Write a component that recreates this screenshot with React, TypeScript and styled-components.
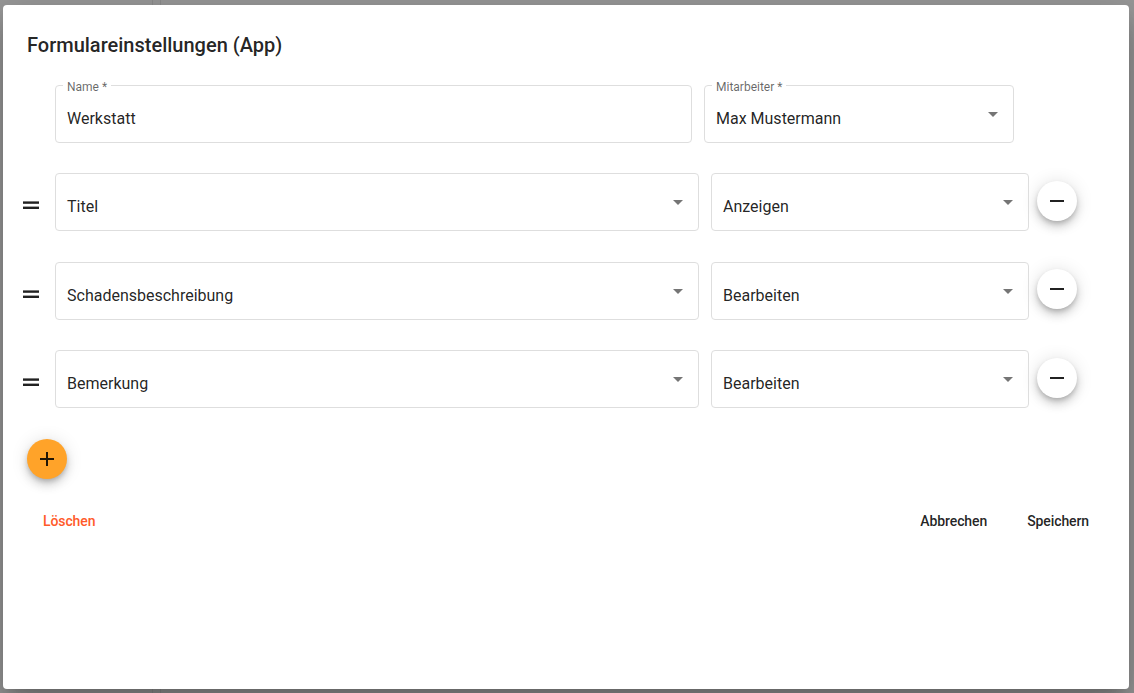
import React from 'react';
import styled, { createGlobalStyle } from 'styled-components';

const Global = createGlobalStyle`
  html, body { margin: 0; padding: 0; }
  body {
    width: 1134px;
    height: 693px;
    overflow: hidden;
    background-color: #999999;
    background-image:
      linear-gradient(to right, transparent 152px, #8d8d8d 152px, #8d8d8d 153px, transparent 153px, transparent 160px, #8d8d8d 160px, #8d8d8d 161px, transparent 161px);
    font-family: Roboto, "Liberation Sans", Arial, sans-serif;
    color: rgba(0, 0, 0, 0.87);
  }
`;

const Page = styled.div`
  width: 1134px;
  height: 693px;
  box-sizing: border-box;
  padding: 5px 5px 4px 3px;
  display: flex;
`;

const Dialog = styled.div`
  flex: 1;
  background: #fff;
  border-radius: 4px;
  box-shadow: 0 11px 15px -7px rgba(0, 0, 0, 0.2), 0 24px 38px 3px rgba(0, 0, 0, 0.14),
    0 9px 46px 8px rgba(0, 0, 0, 0.12);
  display: flex;
  flex-direction: column;
`;

const Title = styled.h2`
  margin: 0;
  padding: 24px 24px 0;
  font-size: 20px;
  line-height: 32px;
  font-weight: 500;
  letter-spacing: 0;
`;

const Content = styled.div`
  margin-top: 24px;
  padding-left: 12px;
  display: flex;
  flex-direction: column;
  gap: 30px;
`;

const RowList = styled.div`
  display: flex;
  flex-direction: column;
  gap: 30.5px;
`;

const Row = styled.div`
  display: flex;
  align-items: center;
  gap: 12px;
`;

const HandleSlot = styled.div`
  width: 32px;
  margin-right: -4px;
  display: flex;
  justify-content: center;
  padding-top: 6px;
`;

const Field = styled.div<{ $w: number }>`
  position: relative;
  box-sizing: border-box;
  width: ${(p) => p.$w}px;
  height: 58px;
  border: 1px solid #dedede;
  border-radius: 4px;
  padding: 0 8px 0 11px;
  display: flex;
  align-items: center;
`;

const Label = styled.span`
  position: absolute;
  top: -6px;
  left: 7px;
  padding: 0 4px;
  background: #fff;
  font-size: 12px;
  line-height: 14px;
  color: rgba(0, 0, 0, 0.6);
`;

const Value = styled.span`
  flex: 1;
  padding-top: 9px;
  font-size: 16px;
  line-height: 23px;
  letter-spacing: 0;
  white-space: nowrap;
`;

const RoundButton = styled.button<{ $bg: string }>`
  width: 40px;
  height: 40px;
  flex: none;
  border: none;
  border-radius: 50%;
  padding: 0;
  background: ${(p) => p.$bg};
  display: flex;
  align-items: center;
  justify-content: center;
  box-shadow: 0 3px 5px -1px rgba(0, 0, 0, 0.2), 0 6px 10px 0 rgba(0, 0, 0, 0.14),
    0 1px 18px 0 rgba(0, 0, 0, 0.12);
  cursor: pointer;
`;

const RemoveButton = styled(RoundButton)`
  margin-left: -4px;
  margin-top: -3px;
`;

const AddButton = styled(RoundButton)`
  margin: 31px 0 0 24px;
`;

const Footer = styled.div`
  margin-top: 24px;
  padding: 0 32px;
  display: flex;
  justify-content: space-between;
  align-items: center;
`;

const ButtonGroup = styled.div`
  display: flex;
  gap: 24px;
`;

const TextButton = styled.button<{ $color?: string }>`
  border: none;
  background: none;
  padding: 6px 8px;
  font-family: Roboto, "Liberation Sans", Arial, sans-serif;
  font-size: 14px;
  line-height: 24px;
  font-weight: 500;
  letter-spacing: -0.1px;
  color: ${(p) => p.$color ?? 'rgba(0, 0, 0, 0.87)'};
  cursor: pointer;
`;

const DragHandle = () => (
  <svg width="18" height="10" viewBox="0 0 18 10">
    <rect x="1" y="1.4" width="16" height="2.4" fill="rgba(0,0,0,0.87)" />
    <rect x="1" y="6.6" width="16" height="2.4" fill="rgba(0,0,0,0.87)" />
  </svg>
);

const Arrow = () => (
  <svg width="24" height="24" viewBox="0 0 24 24">
    <path d="M7 10l5 5 5-5z" fill="rgba(0,0,0,0.54)" />
  </svg>
);

const MinusIcon = () => (
  <svg width="24" height="24" viewBox="0 0 24 24">
    <path d="M19 13H5v-2h14v2z" fill="rgba(0,0,0,0.87)" />
  </svg>
);

const PlusIcon = () => (
  <svg width="24" height="24" viewBox="0 0 24 24">
    <path d="M19 13h-6v6h-2v-6H5v-2h6V5h2v6h6v2z" fill="rgba(0,0,0,0.87)" />
  </svg>
);

const rows = [
  { field: 'Titel', mode: 'Anzeigen' },
  { field: 'Schadensbeschreibung', mode: 'Bearbeiten' },
  { field: 'Bemerkung', mode: 'Bearbeiten' },
];

export default function App() {
  return (
    <>
      <Global />
      <Page>
        <Dialog>
          <Title>Formulareinstellungen (App)</Title>
          <Content>
            <Row>
              <HandleSlot />
              <Field $w={637}>
                <Label>Name *</Label>
                <Value>Werkstatt</Value>
              </Field>
              <Field $w={310}>
                <Label>Mitarbeiter *</Label>
                <Value>Max Mustermann</Value>
                <Arrow />
              </Field>
            </Row>
            <RowList>
              {rows.map((r) => (
                <Row key={r.field}>
                  <HandleSlot>
                    <DragHandle />
                  </HandleSlot>
                  <Field $w={644}>
                    <Value>{r.field}</Value>
                    <Arrow />
                  </Field>
                  <Field $w={318}>
                    <Value>{r.mode}</Value>
                    <Arrow />
                  </Field>
                  <RemoveButton $bg="#ffffff" aria-label="Entfernen">
                    <MinusIcon />
                  </RemoveButton>
                </Row>
              ))}
            </RowList>
          </Content>
          <AddButton $bg="#ffa329" aria-label="Hinzufügen">
            <PlusIcon />
          </AddButton>
          <Footer>
            <TextButton $color="#ff5a2a">Löschen</TextButton>
            <ButtonGroup>
              <TextButton>Abbrechen</TextButton>
              <TextButton>Speichern</TextButton>
            </ButtonGroup>
          </Footer>
        </Dialog>
      </Page>
    </>
  );
}
